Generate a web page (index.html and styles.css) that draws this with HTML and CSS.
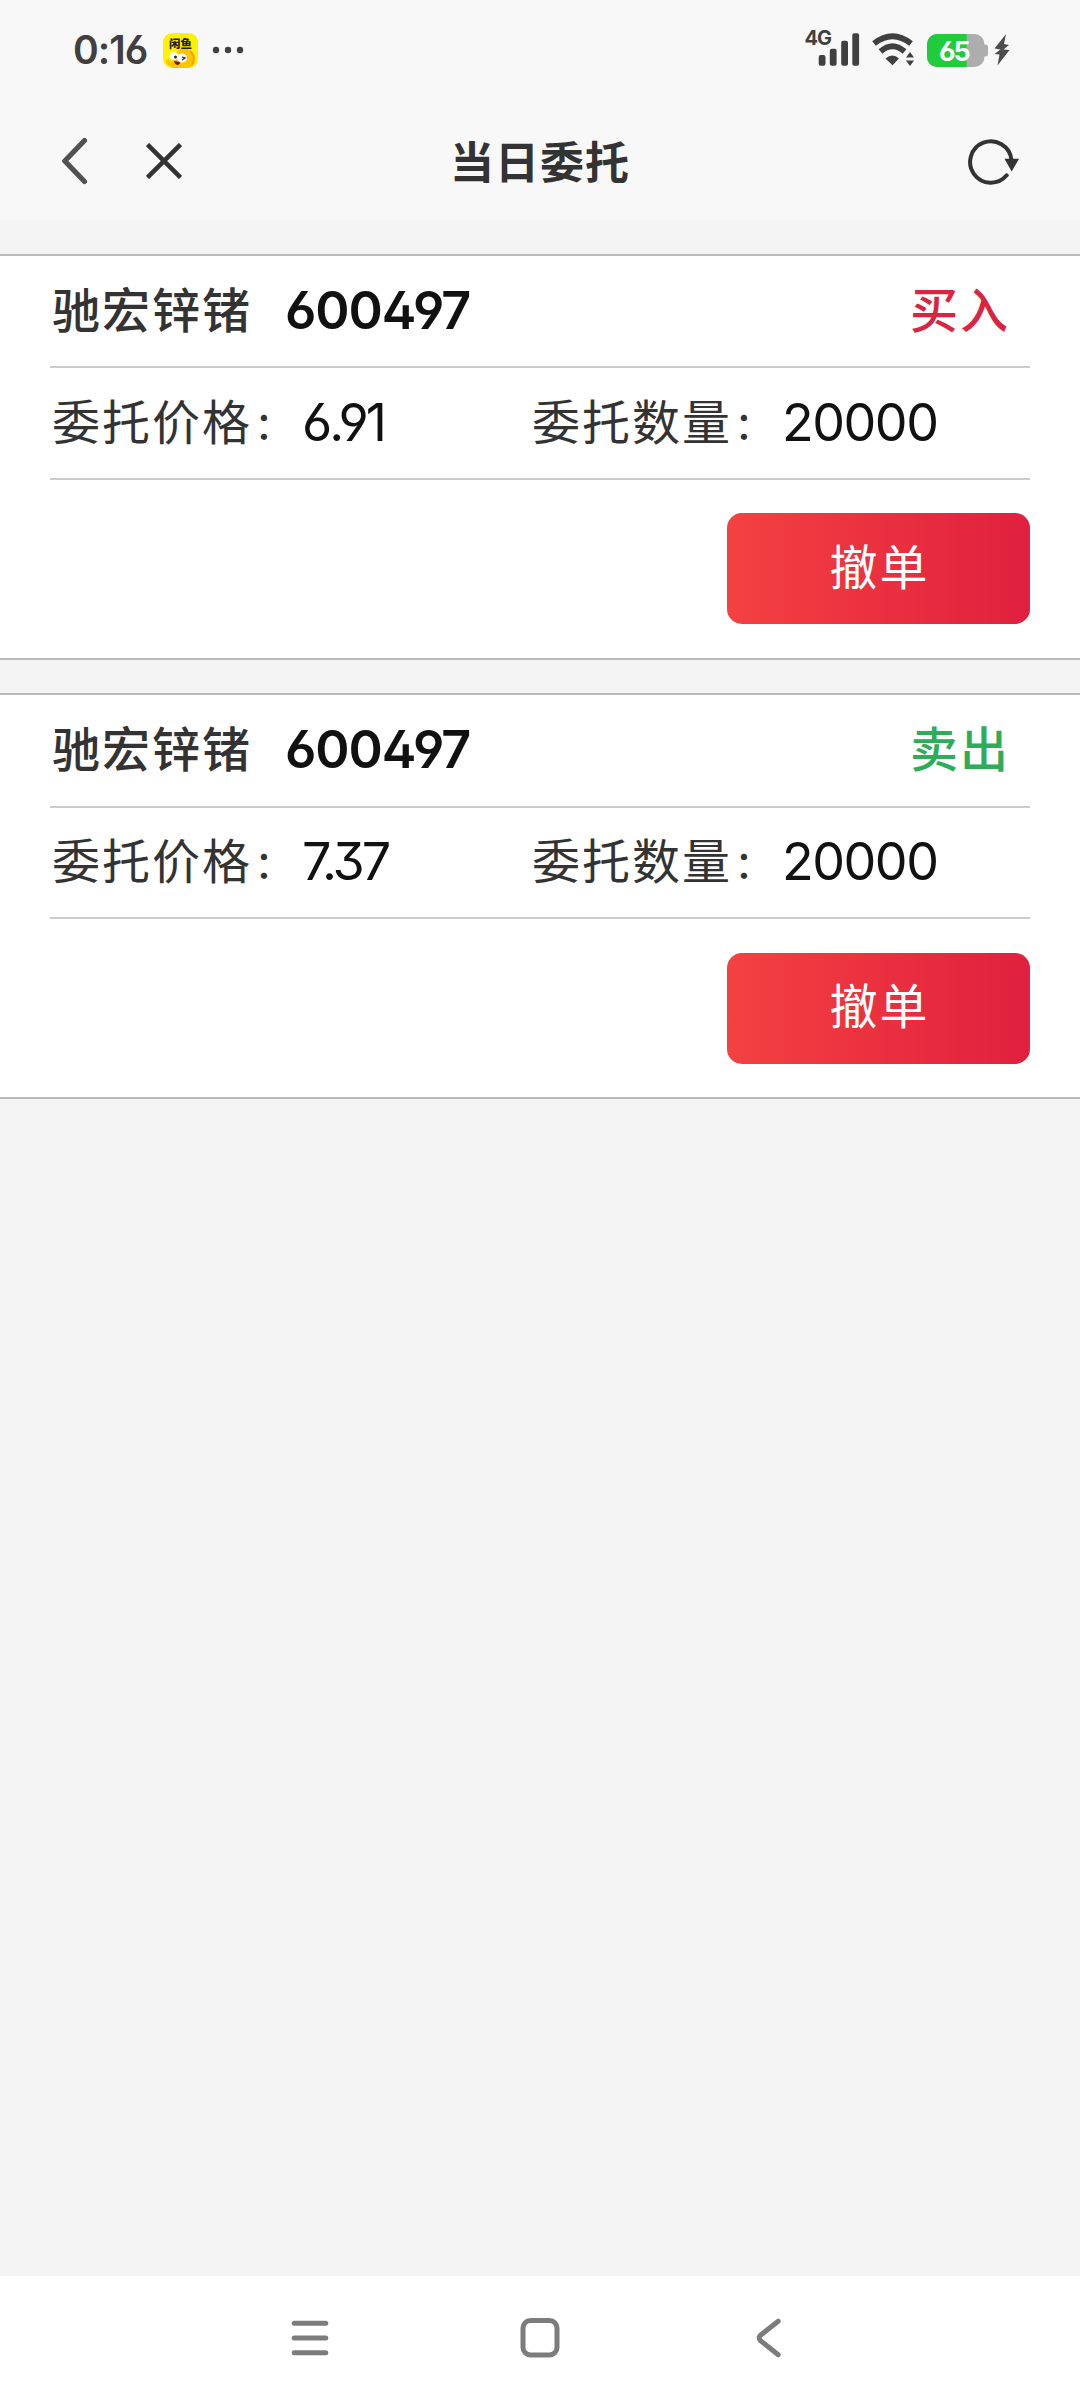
FILE: index.html
```html
<!DOCTYPE html>
<html lang="zh-CN">
<head>
  <meta charset="UTF-8">
  <meta name="viewport" content="width=device-width, initial-scale=1.0">
  <title>当日委托</title>
  <link rel="stylesheet" href="styles.css">
</head>
<body>
  <div class="status-bar">
    <span class="time">0:16</span>
    <svg class="app-icon" width="35" height="35" viewBox="0 0 35 35">
      <rect width="35" height="35" rx="9" fill="#fff200"/>
      <path d="M12 24c1-7 7-9 12-8 6 1 9 6 8 12-1 4-5 7-9 7H10c-4-2-8-5-7-8 1-2 4 0 5 2z" fill="#ffc400"/>
      <path d="M27 18c4 3 5 9 2 14" fill="none" stroke="#f59a0c" stroke-width="1.5"/>
      <ellipse cx="11" cy="23" rx="4.5" ry="4" fill="#fff"/>
      <ellipse cx="19" cy="25" rx="5" ry="4.5" fill="#fff"/>
      <circle cx="12.500" cy="24" r="1.500" fill="#222"/>
      <path d="M19 24l3 1-3 2" fill="none" stroke="#222" stroke-width="1.300"/>
      <path d="M11 28l6 1c0 4-5 4-6-1z" fill="#7a1410"/>
      <text class="app-name" x="6" y="14.500">闲鱼</text>
    </svg>
    <svg class="dots" width="32" height="10" viewBox="0 0 32 10">
      <circle cx="4" cy="5" r="3.200"/>
      <circle cx="16" cy="5" r="3.200"/>
      <circle cx="28" cy="5" r="3.200"/>
    </svg>

    <div class="status-right">
      <svg class="signal" width="56" height="50" viewBox="0 -5 56 50">
        <text class="net" x="0.500" y="15">4G</text>
        <rect x="14.700" y="25" width="6.800" height="10.700" rx="2"/>
        <rect x="25.800" y="18.700" width="6.800" height="17" rx="2"/>
        <rect x="37.200" y="10.700" width="6.800" height="25" rx="2"/>
        <rect x="48.300" y="3.300" width="6.800" height="32.400" rx="2"/>
      </svg>
      <svg class="wifi" width="44" height="40" viewBox="0 0 44 40">
        <path d="M3 13.500Q21.500-1 40 13.500" fill="none" stroke="#404040" stroke-width="5.800"/>
        <path d="M9.500 21.500Q21.500 11 33.500 21.500" fill="none" stroke="#404040" stroke-width="5.800"/>
        <path d="M14.500 28.500Q21.500 22.500 28 28.500L21.500 35.300z"/>
        <path d="M35 27.500l4-5.500 4 5.500zM35 30.500l4 5.500 4-5.500z"/>
      </svg>
      <svg class="battery" width="62" height="33" viewBox="0 0 62 33">
        <rect width="57.500" height="33" rx="10" fill="#adadad"/>
        <rect x="56" y="10.500" width="5" height="12" rx="2.500" fill="#adadad"/>
        <path d="M10 0h29.700v33H10A10 10 0 0 1 0 23V10A10 10 0 0 1 10 0z" fill="#20cc3c"/>
        <text class="level" x="12" y="26.500">65</text>
      </svg>
      <svg class="bolt" width="16" height="32" viewBox="0 0 16 32">
        <path d="M12 0L.5 14.500 6.500 15.500.5 20 5.500 20.500 3.500 31.500 15.500 16 9.500 15.500 15 11 10 10z" fill="#4c4c4c"/>
      </svg>
    </div>
  </div>

  <header class="header">
    <div class="header-left">
      <svg width="26" height="48" viewBox="0 0 26 48">
        <path d="M22.500 3.500L2.800 24 22.500 44.500" fill="none" stroke="#515151" stroke-width="5.200" stroke-linecap="round" stroke-linejoin="round"/>
      </svg>
      <svg width="36" height="36" viewBox="0 0 36 36">
        <path d="M1.500 1.500l33 33M34.500 1.500l-33 33" fill="none" stroke="#333" stroke-width="4.500"/>
      </svg>
    </div>
    <h1 class="title">当日委托</h1>
    <svg class="refresh" width="52" height="48" viewBox="0 0 52 48">
      <path d="M38.700 38.300A20.700 20.700 0 1 1 43.400 22.500" fill="none" stroke="#333" stroke-width="4" stroke-linecap="round"/>
      <path d="M36.500 21.700h14.500L43.700 34.500z" fill="#333"/>
    </svg>
  </header>

  <main class="orders">
    <section class="order">
      <div class="row row-name">
        <span class="name">驰宏锌锗</span>
        <span class="code">600497</span>
        <span class="side buy">买入</span>
      </div>
      <div class="row row-info">
        <div class="field"><span class="label">委托价格<i>:</i></span><span class="num price">6.91</span></div>
        <div class="field"><span class="label">委托数量<i>:</i></span><span class="num">20000</span></div>
      </div>
      <div class="actions">
        <button class="cancel-btn" type="button">撤单</button>
      </div>
    </section>

    <section class="order">
      <div class="row row-name">
        <span class="name">驰宏锌锗</span>
        <span class="code">600497</span>
        <span class="side sell">卖出</span>
      </div>
      <div class="row row-info">
        <div class="field"><span class="label">委托价格<i>:</i></span><span class="num price">7.37</span></div>
        <div class="field"><span class="label">委托数量<i>:</i></span><span class="num">20000</span></div>
      </div>
      <div class="actions">
        <button class="cancel-btn" type="button">撤单</button>
      </div>
    </section>
  </main>

  <nav class="nav-bar">
    <svg width="38" height="40" viewBox="0 0 38 40">
      <path d="M3.200 5.300h31.600M3.200 20h31.600M3.200 34.700h31.600"/>
    </svg>
    <svg class="home" width="40" height="40" viewBox="0 0 40 40">
      <rect x="3" y="2.600" width="34" height="34.400" rx="7.500"/>
    </svg>
    <svg width="26" height="40" viewBox="0 0 26 40">
      <path d="M22.200 3.200L4.500 17.200Q1.800 20 4.500 22.600L22.200 36.800"/>
    </svg>
  </nav>
</body>
</html>
```
FILE: styles.css
```css
* {
  box-sizing: border-box;
}

body {
  margin: 0;
  height: 2400px;
  display: flex;
  flex-direction: column;
  background-color: #f4f4f4;
  color: #333;
  font-family: Inter, "Noto Sans CJK SC", sans-serif;
}

svg {
  display: block;
  flex: none;
}

/* status bar */
.status-bar {
  display: flex;
  align-items: center;
  height: 100px;
  padding: 0 70px 0 73px;
  background-color: #f8f8f8;
}

.time {
  width: 90px;
  font-size: 39px;
  font-weight: 600;
  line-height: 46px;
  letter-spacing: -1px;
  color: #404040;
  font-feature-settings: "ss01";
}

.app-name {
  font-family: "Noto Sans CJK SC", sans-serif;
  font-size: 11.5px;
  font-weight: 900;
  fill: #222;
}

.dots {
  margin-left: 14px;
  fill: #404040;
}

.status-right {
  display: flex;
  align-items: center;
  margin-left: auto;
}

.signal,
.wifi {
  fill: #404040;
}

.net {
  font-family: Inter, sans-serif;
  font-size: 20px;
  font-weight: 700;
  letter-spacing: -1px;
}

.wifi {
  margin-left: 11px;
}

.battery {
  margin-left: 12px;
}

.level {
  font-family: Inter, sans-serif;
  font-size: 27px;
  font-weight: 700;
  letter-spacing: -2px;
  fill: #fff;
  font-feature-settings: "ss01";
}

.bolt {
  margin-left: 5px;
}

/* page header */
.header {
  display: flex;
  align-items: center;
  justify-content: space-between;
  height: 120px;
  padding: 2px 60px 0 62px;
  background-color: #f8f8f8;
}

.header-left {
  display: flex;
  align-items: center;
  gap: 58px;
  width: 388px;
}

.title {
  margin: 0;
  padding-top: 3px;
  flex: 1;
  font-size: 44px;
  font-weight: 600;
  line-height: 60px;
  letter-spacing: 1px;
}

/* orders */
.orders {
  flex: 1;
  padding-top: 33.95px;
}

.order {
  height: 405.95px;
  margin-bottom: 33.5px;
  padding: 0 50px;
  background-color: #fff;
  border-top: 2px solid #bababa;
  border-bottom: 2px solid #bababa;
}

.row {
  display: flex;
  align-items: center;
  border-bottom: 2px solid #ccc;
  font-size: 48px;
  line-height: 70px;
}

.row-name {
  height: 112.2px;
  font-weight: 600;
}

.row-info {
  height: 111.8px;
}

.name {
  width: 235px;
  padding-left: 2px;
  font-weight: 500;
  letter-spacing: 2px;
}

.code {
  font-size: 52px;
  letter-spacing: -1.1px;
  color: #111;
  font-feature-settings: "ss01";
}

.side {
  margin-left: auto;
  padding-right: 20px;
  font-weight: 500;
  letter-spacing: 2px;
}

.buy {
  color: #da2440;
}

.sell {
  color: #2fac5a;
}

.field {
  display: flex;
  align-items: center;
  width: 480px;
  padding-left: 2px;
}

.label {
  width: 250px;
  letter-spacing: 2px;
}

.label i {
  font-style: normal;
  margin-left: 5px;
}

.num {
  font-size: 52px;
  letter-spacing: -1.5px;
  color: #111;
  font-feature-settings: "ss01";
}

.price {
  letter-spacing: -3px;
}

.actions {
  display: flex;
  justify-content: flex-end;
  padding-top: 33.15px;
}

.cancel-btn {
  width: 303px;
  height: 111px;
  padding: 0 0 10px 2px;
  border: none;
  border-radius: 15px;
  background: linear-gradient(to right, #f44141, #e0203e);
  color: #fff;
  font-family: "Noto Sans CJK SC", sans-serif;
  font-size: 48px;
  letter-spacing: 2px;
}

/* system navigation */
.nav-bar {
  display: flex;
  align-items: center;
  justify-content: space-between;
  height: 124px;
  padding: 0 298px 0 291px;
  background-color: #fff;
}

.nav-bar svg {
  fill: none;
  stroke: #7c7c7c;
  stroke-width: 5;
  stroke-linecap: round;
}

.nav-bar .home {
  margin-right: 6px;
}
```
